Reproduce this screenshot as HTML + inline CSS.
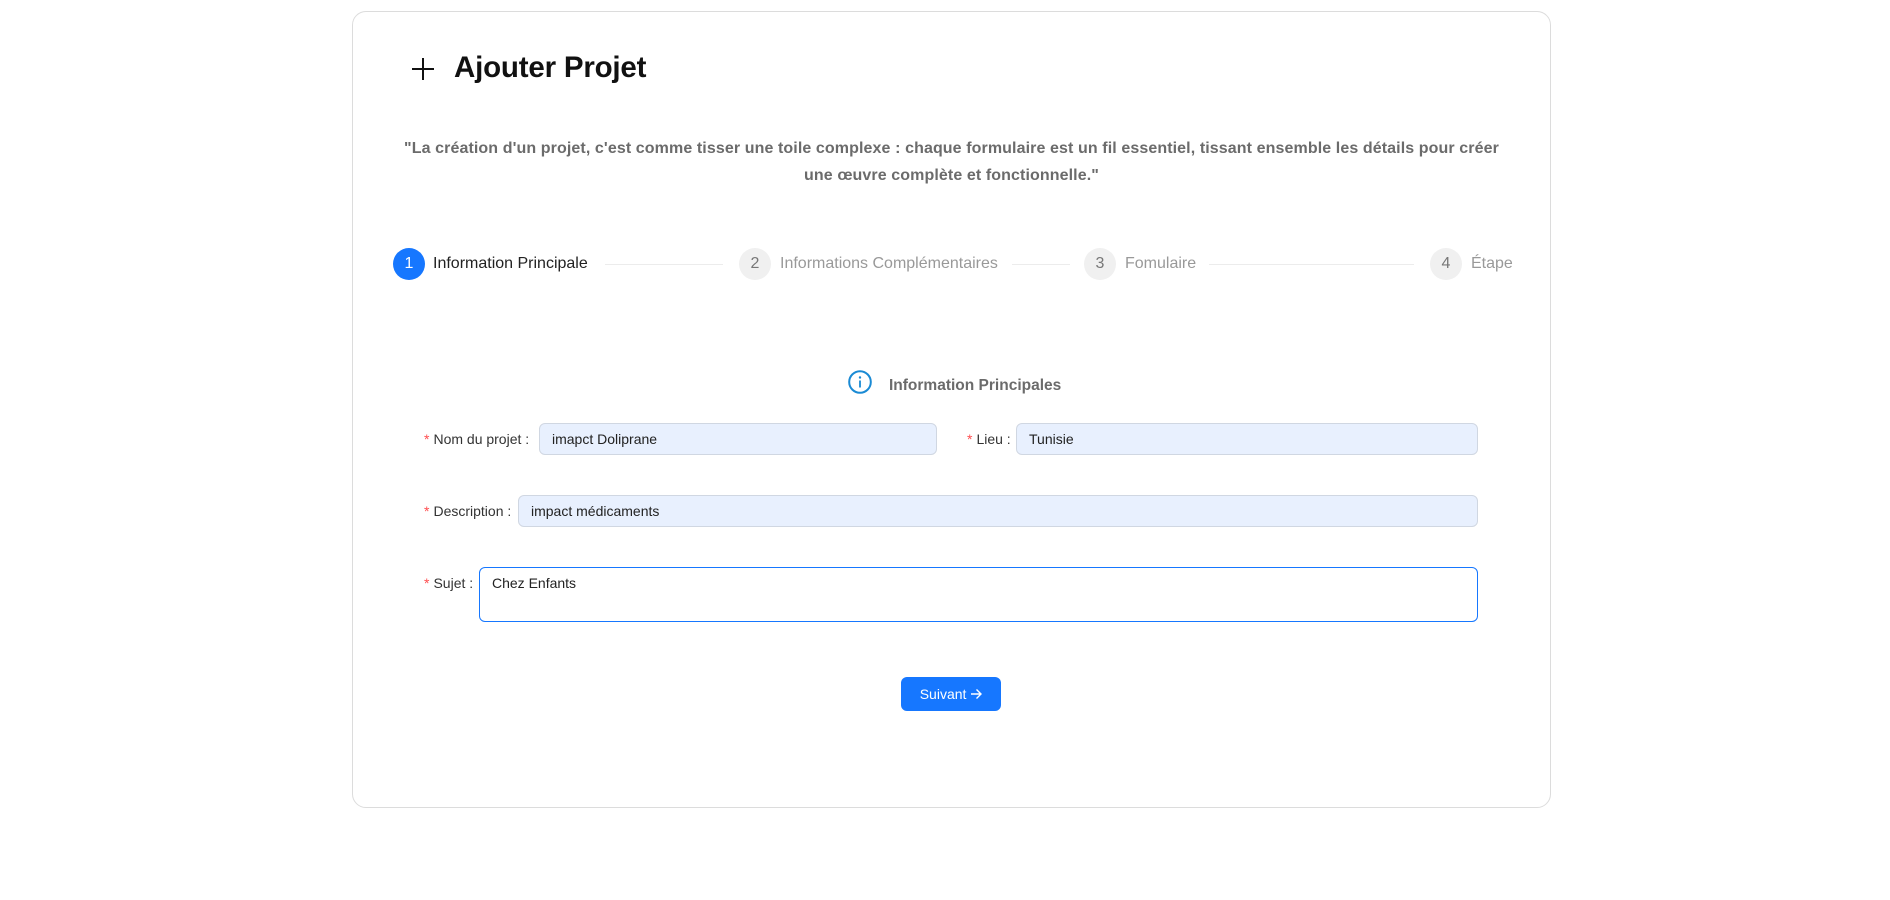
<!DOCTYPE html>
<html><head><meta charset="utf-8"><style>
*{box-sizing:border-box;margin:0;padding:0}
body{width:1890px;height:900px;background:#fff;font-family:"Liberation Sans",sans-serif;position:relative;overflow:hidden}
.card{position:absolute;left:352px;top:11px;width:1199px;height:797px;border:1px solid #dcdcdc;border-radius:14px}
.a{position:absolute;white-space:nowrap}
.circ{position:absolute;width:32px;height:32px;border-radius:50%;background:#f0f0f0;color:#777;font-size:16px;line-height:32px;text-align:center;top:248px}
.st{position:absolute;top:254px;font-size:16px;color:#999;line-height:20px}
.ln{position:absolute;top:264px;height:1px;background:#ececec}
.lbl{position:absolute;font-size:14px;color:#333;line-height:20px}
.lbl i{color:#ff4d4f;font-style:normal;margin-right:4px}
.inp{position:absolute;height:32px;background:#e8f0fe;border:1px solid #d0d7e2;border-radius:6px;font-size:14px;color:#222;padding-left:12px;line-height:30px}
</style></head><body>
<div class="card"></div>
<svg class="a" style="left:411px;top:57px" width="24" height="24" viewBox="0 0 24 24"><path d="M12 1V23M1 12H23" stroke="#111" stroke-width="2"/></svg>
<div class="a" style="left:454px;top:51px;font-size:29.5px;font-weight:bold;color:#111;letter-spacing:-0.2px">Ajouter Projet</div>
<div class="a" style="left:352px;width:1199px;top:135px;text-align:center;font-size:16px;font-weight:bold;color:#6b6b6b;line-height:27px;letter-spacing:0.1px">"La création d'un projet, c'est comme tisser une toile complexe : chaque formulaire est un fil essentiel, tissant ensemble les détails pour créer<br>une œuvre complète et fonctionnelle."</div>

<div class="circ" style="left:393px;background:#1677ff;color:#fff">1</div>
<div class="st" style="left:433px;color:#222">Information Principale</div>
<div class="ln" style="left:605px;width:118px"></div>
<div class="circ" style="left:739px">2</div>
<div class="st" style="left:780px">Informations Complémentaires</div>
<div class="ln" style="left:1012px;width:58px"></div>
<div class="circ" style="left:1084px">3</div>
<div class="st" style="left:1125px">Fomulaire</div>
<div class="ln" style="left:1209px;width:205px"></div>
<div class="circ" style="left:1430px">4</div>
<div class="st" style="left:1471px">Étape</div>

<svg class="a" style="left:848px;top:370px" width="24" height="24" viewBox="0 0 24 24"><circle cx="12" cy="12" r="10.8" fill="none" stroke="#1a8ad4" stroke-width="2"/><circle cx="12" cy="7.5" r="1.2" fill="#1a8ad4"/><path d="M12 10.5V17.5" stroke="#1a8ad4" stroke-width="1.8"/></svg>
<div class="a" style="left:889px;top:376px;font-size:15.5px;font-weight:bold;color:#6b6b6b;line-height:20px">Information Principales</div>

<div class="lbl" style="left:424px;top:429px"><i>*</i>Nom du projet :</div>
<div class="inp" style="left:539px;top:423px;width:398px">imapct Doliprane</div>
<div class="lbl" style="left:967px;top:429px"><i>*</i>Lieu :</div>
<div class="inp" style="left:1016px;top:423px;width:462px">Tunisie</div>
<div class="lbl" style="left:424px;top:501px"><i>*</i>Description :</div>
<div class="inp" style="left:518px;top:495px;width:960px">impact médicaments</div>
<div class="lbl" style="left:424px;top:573px"><i>*</i>Sujet :</div>
<div class="inp" style="left:479px;top:567px;width:999px;height:55px;background:#fff;border:1px solid #1677ff;line-height:20px;padding-top:5px">Chez Enfants</div>

<div class="a" style="left:901px;top:677px;width:100px;height:34px;background:#1677ff;border-radius:6px;color:#fff;font-size:14px;line-height:34px;text-align:center">Suivant <svg width="12" height="12" viewBox="0 0 12 12" style="vertical-align:-1px"><path d="M1 6H11M6.5 1.5L11 6L6.5 10.5" fill="none" stroke="#fff" stroke-width="1.4"/></svg></div>
</body></html>
